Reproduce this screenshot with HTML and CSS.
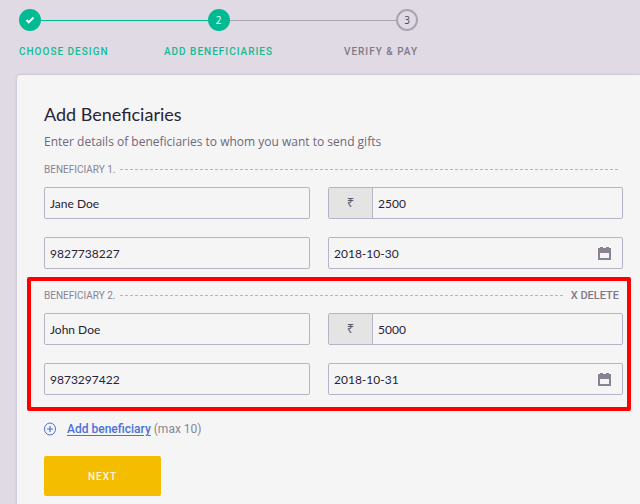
FILE: index.html
```html
<!DOCTYPE html>
<html lang="en">
<head>
    <meta charset="UTF-8">
    <meta name="viewport" content="width=device-width, initial-scale=1.0">
    <title>Add Beneficiaries</title>
    <link rel="stylesheet" href="styles.css">
</head>
<body>
    <nav class="stepper">
        <div class="step-track">
            <span class="step-dot done">
                <svg width="10" height="8" viewBox="0 0 10 8"><path d="M1.5 4l2.2 2.3L8.5 1.5" fill="none" stroke="#fff" stroke-width="2"/></svg>
            </span>
            <span class="step-line done"></span>
            <span class="step-dot done">2</span>
            <span class="step-line"></span>
            <span class="step-dot">3</span>
        </div>
        <ol class="step-labels">
            <li class="done">CHOOSE DESIGN</li>
            <li class="done">ADD BENEFICIARIES</li>
            <li>VERIFY &amp; PAY</li>
        </ol>
    </nav>

    <main class="card">
        <h1>Add Beneficiaries</h1>
        <p class="intro">Enter details of beneficiaries to whom you want to send gifts</p>

        <form>
            <section class="beneficiary">
                <div class="beneficiary-head">
                    <h2>BENEFICIARY 1.</h2>
                    <span class="dashes"></span>
                </div>
                <div class="fields">
                    <input class="field" type="text" aria-label="Name" value="Jane Doe">
                    <div class="field group">
                        <label class="currency" for="amount1">₹</label>
                        <input id="amount1" type="text" value="2500">
                    </div>
                    <input class="field" type="tel" aria-label="Mobile number" value="9827738227">
                    <div class="field group">
                        <input id="date1" type="text" aria-label="Delivery date" value="2018-10-30">
                        <label class="calendar" for="date1">
                            <svg width="13" height="13" viewBox="0 0 13 13"><path d="M2 0h3v1h3V0h3v1h2v12H0V1h2zM2 6v5h9V6z" fill="#8a8292" fill-rule="evenodd"/></svg>
                        </label>
                    </div>
                </div>
            </section>

            <section class="beneficiary highlighted">
                <div class="beneficiary-head">
                    <h2>BENEFICIARY 2.</h2>
                    <span class="dashes"></span>
                    <button class="delete" type="button">X DELETE</button>
                </div>
                <div class="fields">
                    <input class="field" type="text" aria-label="Name" value="John Doe">
                    <div class="field group">
                        <label class="currency" for="amount2">₹</label>
                        <input id="amount2" type="text" value="5000">
                    </div>
                    <input class="field" type="tel" aria-label="Mobile number" value="9873297422">
                    <div class="field group">
                        <input id="date2" type="text" aria-label="Delivery date" value="2018-10-31">
                        <label class="calendar" for="date2">
                            <svg width="13" height="13" viewBox="0 0 13 13"><path d="M2 0h3v1h3V0h3v1h2v12H0V1h2zM2 6v5h9V6z" fill="#8a8292" fill-rule="evenodd"/></svg>
                        </label>
                    </div>
                </div>
            </section>

            <div class="add-row">
                <svg width="12" height="14" viewBox="0 0 12 14"><path d="M6 4v6M3 7h6" stroke="#4a72d8" stroke-width="1.2"/><ellipse cx="6" cy="7" rx="5.5" ry="6" fill="none" stroke="#4a72d8"/></svg>
                <p><a href="#">Add beneficiary</a> (max 10)</p>
            </div>
            <button class="next" type="submit">NEXT</button>
        </form>
    </main>
</body>
</html>
```

FILE: styles.css
```css
* {
    box-sizing: border-box;
}
body {
    display: flex;
    flex-direction: column;
    min-height: 100vh;
    margin: 0;
    background-color: #e0dae4;
    color: #2a2235;
    font-family: Lato, sans-serif;
    font-size: 12px;
}
h1, h2, p, ol {
    margin: 0;
    padding: 0;
}
input, button {
    font: inherit;
    color: inherit;
}

/* Stepper */
.stepper {
    width: 100%;
    max-width: 437px;
    padding: 9px 19px 15px;
}
.step-track {
    display: flex;
    align-items: center;
}
.step-dot {
    display: flex;
    align-items: center;
    justify-content: center;
    width: 22px;
    height: 22px;
    border: 2px solid #aaa4b3;
    border-radius: 50%;
    color: #4a4355;
    font-family: "Open Sans", sans-serif;
    font-size: 10px;
}
.step-dot.done {
    border-color: #00ba93;
    background-color: #00ba93;
    color: white;
}
.step-line {
    flex: 1;
    height: 1px;
    background-color: #aaa4b3;
}
.step-line.done {
    background-color: #00ba93;
}
.step-labels {
    display: grid;
    grid-template-columns: 1fr auto 1fr;
    margin-top: 13px;
    list-style: none;
    color: #7f788a;
    font-family: Roboto, sans-serif;
    font-size: 10px;
    font-weight: 500;
    line-height: 16px;
    letter-spacing: 1px;
}
.step-labels .done {
    color: #14ba95;
}
.step-labels li:last-child {
    text-align: right;
}

/* Card */
.card {
    flex: 1;
    margin-left: 17px;
    padding: 27px 17px 8px 27px;
    border-radius: 4px 0 0 0;
    background-color: #f5f5f5;
    box-shadow: 0 0 3px rgba(80, 60, 110, 0.25);
}
h1 {
    font-size: 18px;
    font-weight: normal;
    line-height: 24px;
}
.intro {
    margin-top: 8px;
    color: #6f6879;
    font-family: "Open Sans", sans-serif;
    line-height: 16px;
}

/* Beneficiaries */
.beneficiary {
    position: relative;
    margin-bottom: 18px;
}
.intro + form {
    padding-top: 11px;
}
.highlighted::after {
    content: "";
    position: absolute;
    inset: -10px -8px -16px -17px;
    border: 4px solid #fe0000;
    border-radius: 2px;
    pointer-events: none;
}
.beneficiary-head {
    display: flex;
    align-items: center;
    gap: 4px;
    height: 16px;
    margin-bottom: 10px;
    padding-right: 4px;
}
h2 {
    color: #8a8494;
    font-family: Roboto, sans-serif;
    font-size: 10px;
    font-weight: normal;
}
.dashes {
    flex: 1;
    height: 1px;
    background: repeating-linear-gradient(to right, #b8b4c8 0 3px, transparent 3px 5px);
}
.delete {
    margin-left: 3px;
    padding: 0;
    border: none;
    background: none;
    color: #7f788a;
    font-family: Roboto, sans-serif;
    font-size: 11px;
    font-weight: 500;
    cursor: pointer;
}
.fields {
    display: grid;
    grid-template-columns: 266fr 295fr;
    gap: 18px;
}
.field {
    width: 100%;
    height: 32px;
    padding: 0 5px;
    border: 1px solid #b8b4c8;
    border-radius: 2px;
    background: none;
}
.group {
    display: flex;
    align-items: stretch;
    padding: 0;
}
.group input {
    flex: 1;
    min-width: 0;
    padding: 0 5px;
    border: none;
    background: none;
}
.currency {
    width: 44px;
    border-right: 1px solid #b8b4c8;
    background-color: #e4e4e4;
    color: #5f5a66;
    font-family: "Noto Sans", sans-serif;
    font-size: 13px;
    line-height: 28px;
    text-align: center;
}
.calendar {
    display: flex;
    align-items: center;
    padding-right: 11px;
}

/* Actions */
.add-row {
    display: flex;
    align-items: center;
    gap: 11px;
    margin-top: 26px;
    color: #8a8494;
    font-family: Roboto, sans-serif;
    line-height: 16px;
}
.add-row a {
    color: #4a72d8;
    font-weight: 500;
    text-underline-offset: 2px;
}
.next {
    display: block;
    width: 117px;
    height: 40px;
    margin-top: 19px;
    border: none;
    border-radius: 2px;
    background-color: #f5bd00;
    color: #fcf6e2;
    font-family: Roboto, sans-serif;
    font-size: 10px;
    font-weight: 500;
    letter-spacing: 1px;
    cursor: pointer;
}
```
